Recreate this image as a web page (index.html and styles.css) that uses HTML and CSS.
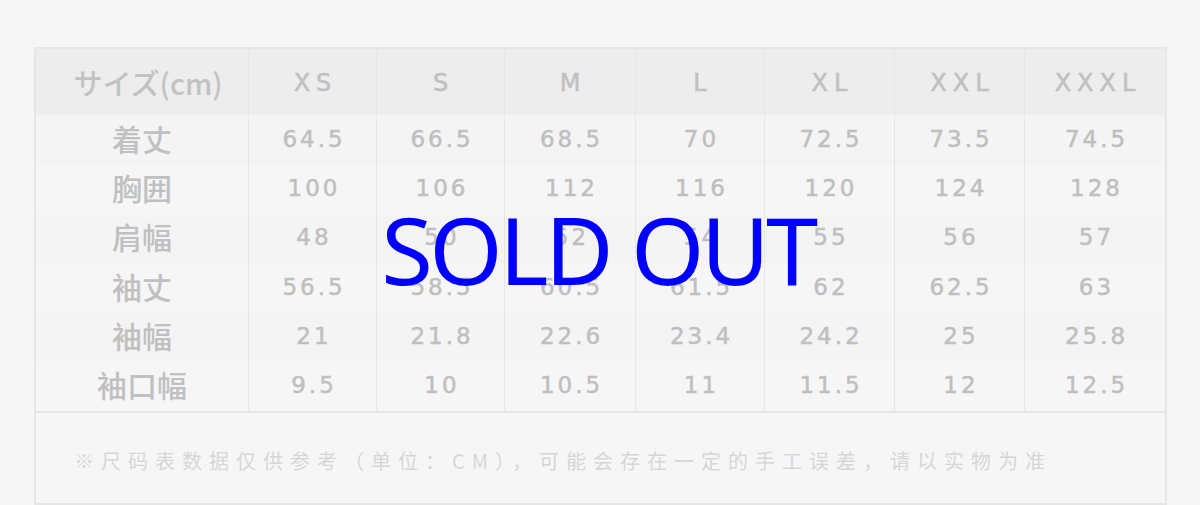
FILE: index.html
```html
<!DOCTYPE html>
<html lang="zh">
<head>
<meta charset="utf-8">
<title>Size chart</title>
<link rel="stylesheet" href="styles.css">
</head>
<body>
<div class="page">
  <div class="chart">
    <div class="grid">
      <div class="cell head label">サイズ(cm)</div>
      <div class="cell head">XS</div>
      <div class="cell head">S</div>
      <div class="cell head">M</div>
      <div class="cell head">L</div>
      <div class="cell head">XL</div>
      <div class="cell head">XXL</div>
      <div class="cell head last">XXXL</div>

      <div class="cell rl odd">着丈</div>
      <div class="cell num odd">64.5</div><div class="cell num odd">66.5</div><div class="cell num odd">68.5</div><div class="cell num odd">70</div><div class="cell num odd">72.5</div><div class="cell num odd">73.5</div><div class="cell num odd last">74.5</div>

      <div class="cell rl even">胸囲</div>
      <div class="cell num even">100</div><div class="cell num even">106</div><div class="cell num even">112</div><div class="cell num even">116</div><div class="cell num even">120</div><div class="cell num even">124</div><div class="cell num even last">128</div>

      <div class="cell rl odd">肩幅</div>
      <div class="cell num odd">48</div><div class="cell num odd">50</div><div class="cell num odd">52</div><div class="cell num odd">54</div><div class="cell num odd">55</div><div class="cell num odd">56</div><div class="cell num odd last">57</div>

      <div class="cell rl even">袖丈</div>
      <div class="cell num even">56.5</div><div class="cell num even">58.5</div><div class="cell num even">60.5</div><div class="cell num even">61.5</div><div class="cell num even">62</div><div class="cell num even">62.5</div><div class="cell num even last">63</div>

      <div class="cell rl odd">袖幅</div>
      <div class="cell num odd">21</div><div class="cell num odd">21.8</div><div class="cell num odd">22.6</div><div class="cell num odd">23.4</div><div class="cell num odd">24.2</div><div class="cell num odd">25</div><div class="cell num odd last">25.8</div>

      <div class="cell rl even">袖口幅</div>
      <div class="cell num even">9.5</div><div class="cell num even">10</div><div class="cell num even">10.5</div><div class="cell num even">11</div><div class="cell num even">11.5</div><div class="cell num even">12</div><div class="cell num even last">12.5</div>
    </div>
    <div class="note">※尺码表数据仅供参考（单位：CM），可能会存在一定的手工误差，请以实物为准</div>
  </div>
</div>
<div class="sold">SOLD OUT</div>
</body>
</html>
```

FILE: styles.css
```css
html, body {
  margin: 0;
  padding: 0;
}
body {
  width: 1200px;
  height: 505px;
  background: #f6f6f6;
  overflow: hidden;
  position: relative;
}
.page {
  padding: 47px 0 0 34px;
}
.chart {
  width: 1133px;
  border: 2px solid #e6e6e6;
  box-sizing: border-box;
  background: #f5f5f5;
}
.grid {
  display: grid;
  grid-template-columns: 213px 128px 128px 131px 129px 130px 130px 140px;
  grid-template-rows: 66px repeat(6, 49.33px);
}
.cell {
  display: flex;
  align-items: center;
  justify-content: center;
  border-right: 1px solid #e6e6e6;
  box-sizing: border-box;
}
.cell.last {
  border-right: none;
}
.head {
  background: #ededed;
  font-family: "DejaVu Sans", sans-serif;
  font-size: 24px;
  letter-spacing: 6px;
  padding-left: 6px;
  padding-top: 2px;
  color: #c0c0c0;
  -webkit-text-stroke: 0.5px #c0c0c0;
}
.head.label {
  font-family: "Noto Sans CJK JP", "Noto Sans", sans-serif;
  font-size: 29px;
  font-weight: 500;
  letter-spacing: 0;
  padding-left: 12px;
  padding-top: 0;
  color: #c2c2c2;
  -webkit-text-stroke: 0;
}
.odd {
  background: #f4f4f4;
}
.even {
  background: #f6f6f6;
}
.rl {
  font-family: "Noto Sans CJK JP", sans-serif;
  font-size: 30px;
  font-weight: 500;
  color: #c0c0c0;
  padding-bottom: 4px;
}
.num {
  font-family: "DejaVu Sans", sans-serif;
  font-size: 23px;
  letter-spacing: 3px;
  padding-left: 3px;
  color: #bfbfbf;
  -webkit-text-stroke: 0.5px #bfbfbf;
  padding-bottom: 2px;
}
.note {
  border-top: 2px solid #e6e6e6;
  height: 92px;
  box-sizing: border-box;
  display: flex;
  align-items: center;
  padding: 6px 0 0 38px;
  font-family: "Noto Sans CJK SC", sans-serif;
  font-size: 20px;
  letter-spacing: 7px;
  color: #d6d6d6;
  background: #f6f6f6;
}
.sold {
  position: absolute;
  left: 0;
  top: 0;
  width: 1200px;
  height: 505px;
  display: flex;
  align-items: center;
  justify-content: center;
  font-family: "Noto Sans", "Open Sans", sans-serif;
  font-size: 94px;
  letter-spacing: -3.5px;
  color: #0000ff;
  padding: 0 4px 8px 0;
  box-sizing: border-box;
}
```
